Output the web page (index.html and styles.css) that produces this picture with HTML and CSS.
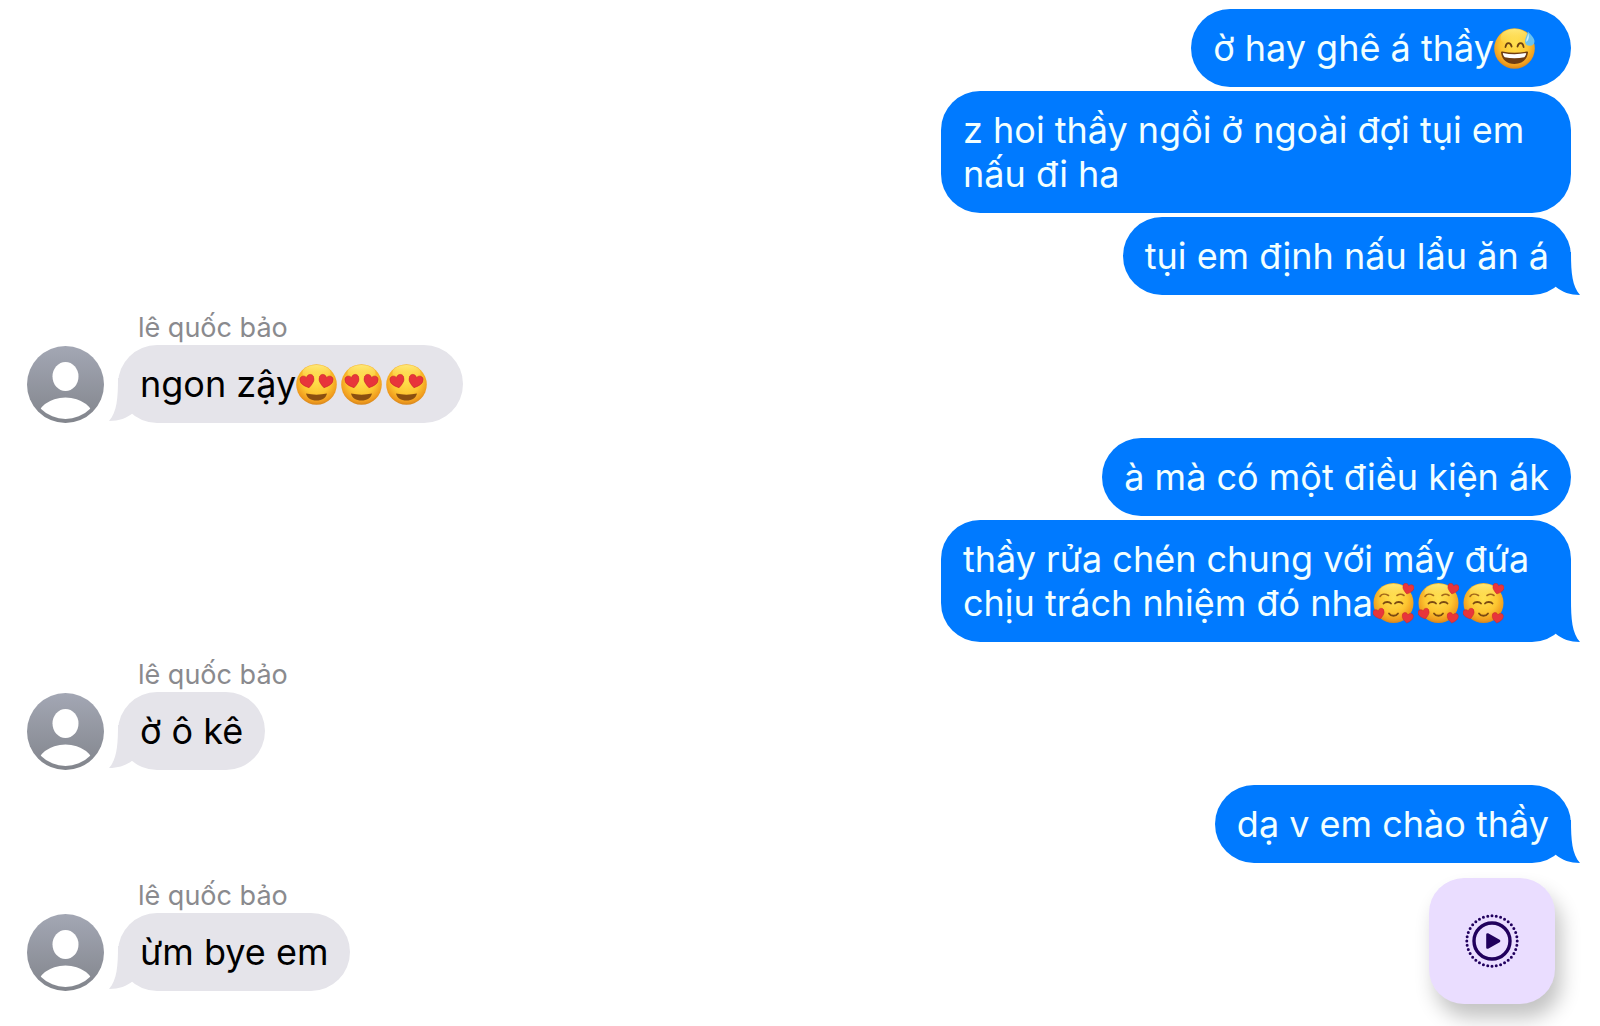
FILE: index.html
```html
<!DOCTYPE html>
<html lang="vi">
<head>
    <meta charset="UTF-8">
    <meta name="viewport" content="width=device-width, initial-scale=1.0">
    <title>Messages</title>
    <link rel="stylesheet" href="styles.css">
</head>
<body>

<!-- shared drawings -->
<svg class="defs" aria-hidden="true">
    <defs>
        <radialGradient id="face" cx="0.5" cy="0.4" r="0.62">
            <stop offset="0" stop-color="#ffe04f"/>
            <stop offset="0.55" stop-color="#fdc631"/>
            <stop offset="0.85" stop-color="#f09c1e"/>
            <stop offset="1" stop-color="#cf7f1c"/>
        </radialGradient>
        <linearGradient id="shine" x1="0" y1="0" x2="0" y2="1">
            <stop offset="0" stop-color="#fff28a" stop-opacity="0.8"/>
            <stop offset="1" stop-color="#ffe75c" stop-opacity="0"/>
        </linearGradient>
        <linearGradient id="avatar-bg" x1="0" y1="0" x2="0" y2="1">
            <stop offset="0" stop-color="#a3a7b4"/>
            <stop offset="1" stop-color="#82858c"/>
        </linearGradient>
        <clipPath id="avatar-clip"><circle cx="38.5" cy="38.5" r="34.5"/></clipPath>
    </defs>

    <symbol id="heart" viewBox="0 0 20 18">
        <path d="M10 17.5C4 13.5 0.5 10 0.5 5.8C0.5 2.5 2.7 0.6 5.2 0.6C7.3 0.6 9 1.7 10 3.8C11 1.7 12.7 0.6 14.8 0.6C17.3 0.6 19.5 2.5 19.5 5.8C19.5 10 16 13.5 10 17.5Z" fill="#e8353b" stroke="#c8282c" stroke-width="0.8"/>
    </symbol>

    <symbol id="sweat" viewBox="0 0 41 41">
        <circle cx="20.5" cy="20.5" r="20.3" fill="url(#face)"/>
        <ellipse cx="20.5" cy="9.5" rx="14" ry="8.5" fill="url(#shine)"/>
        <path d="M11.5 19C12.2 13.8 16.5 13.8 17.6 18.5M23.5 18.5C24.6 13.8 28.9 13.8 29.6 19" fill="none" stroke="#6b4112" stroke-width="1.8" stroke-linecap="round"/>
        <path d="M7 24.5C7 23.8 7.6 23.4 8.4 23.6C16.5 25.2 24.5 25.2 32.6 23.6C33.4 23.4 34 23.8 34 24.5C33 32 27.8 36 20.5 36C13.2 36 8 32 7 24.5Z" fill="#6f3d12"/>
        <path d="M8.8 25C16.5 26.6 24.5 26.6 32.2 25C32 27 31.2 28.5 30.2 29.2C24 30.6 17 30.6 10.8 29.2C9.8 28.5 9 27 8.8 25Z" fill="#fff"/>
        <path d="M34 3.5C36.5 6.5 40.5 10 40.5 13.2C40.5 16 38.3 17.8 35.7 17.8C33 17.8 31 16 31 13.4C31 10 33 7 34 3.5Z" fill="#6cc3ee"/>
        <path d="M34.4 5.5C33.5 9 32 11 32.2 13.8C34.2 13 35.6 9.5 34.4 5.5Z" fill="#c9edfc"/>
    </symbol>

    <symbol id="heart-eyes" viewBox="0 0 41 41">
        <circle cx="20.5" cy="20.5" r="20.3" fill="url(#face)"/>
        <ellipse cx="20.5" cy="9" rx="14" ry="8" fill="url(#shine)"/>
        <use href="#heart" x="4" y="9.5" width="15" height="16" transform="rotate(-14 11.5 17.5)"/>
        <use href="#heart" x="22" y="9.5" width="15" height="16" transform="rotate(14 29.5 17.5)"/>
        <path d="M10 29.5C16.5 31 24.5 31 31 29.5C30 34 26 36.5 20.5 36.5C15 36.5 11 34 10 29.5Z" fill="#8a4f10"/>
    </symbol>

    <symbol id="hearts" viewBox="0 0 41 41">
        <circle cx="20.5" cy="20" r="20" fill="url(#face)"/>
        <ellipse cx="20.5" cy="9" rx="14" ry="8" fill="url(#shine)"/>
        <path d="M7 13.5C8.5 11 12 10.5 15.5 12.5M24 12.5C26.5 10.8 29 11 31 12.5" fill="none" stroke="#a4691a" stroke-width="1.6" stroke-linecap="round"/>
        <path d="M10.5 20.5C12 18.5 16.5 18.5 18 20.5M22 20.5C23.5 18.5 28 18.5 29.5 20.5M16 30.5C18 33.5 23 33.5 25 30.5" fill="none" stroke="#7a4a12" stroke-width="1.8" stroke-linecap="round"/>
        <use href="#heart" x="29" y="0" width="12" height="12" transform="rotate(14 35 6)"/>
        <use href="#heart" x="0" y="25" width="12" height="12" transform="rotate(-14 6 31)"/>
        <use href="#heart" x="28.5" y="29" width="12" height="12" transform="rotate(8 34.5 35)"/>
    </symbol>

    <symbol id="tail" viewBox="0 0 34 43">
        <path d="M25 0C25 20 26 34 34 43C24 43 16 40 10 35L0 20V0Z" fill="currentColor"/>
    </symbol>

    <symbol id="person" viewBox="0 0 77 77">
        <circle cx="38.5" cy="38.5" r="38.5" fill="url(#avatar-bg)"/>
        <ellipse cx="38.5" cy="30.5" rx="13" ry="14.5" fill="#fff"/>
        <ellipse cx="38.5" cy="74" rx="29" ry="22.5" fill="#fff" clip-path="url(#avatar-clip)"/>
    </symbol>
</svg>

<main class="chat">
    <div class="group sent">
        <p class="bubble">ờ hay ghê á thầy<svg class="emoji" role="img" aria-label="😅"><use href="#sweat"/></svg>&nbsp;</p>
        <p class="bubble">z hoi thầy ngồi ở ngoài đợi tụi em nấu đi ha</p>
        <p class="bubble">tụi em định nấu lẩu ăn á<svg class="tail" aria-hidden="true"><use href="#tail"/></svg></p>
    </div>

    <div class="group received">
        <div class="name">lê quốc bảo</div>
        <div class="row">
            <svg class="avatar" aria-hidden="true"><use href="#person"/></svg>
            <p class="bubble">ngon zậy<svg class="emoji" role="img" aria-label="😍"><use href="#heart-eyes"/></svg><svg class="emoji" role="img" aria-label="😍"><use href="#heart-eyes"/></svg><svg class="emoji" role="img" aria-label="😍"><use href="#heart-eyes"/></svg>&nbsp;<svg class="tail" aria-hidden="true"><use href="#tail"/></svg></p>
        </div>
    </div>

    <div class="group sent">
        <p class="bubble">à mà có một điều kiện ák</p>
        <p class="bubble">thầy rửa chén chung với mấy đứa chịu trách nhiệm đó nha<svg class="emoji" role="img" aria-label="🥰"><use href="#hearts"/></svg><svg class="emoji" role="img" aria-label="🥰"><use href="#hearts"/></svg><svg class="emoji" role="img" aria-label="🥰"><use href="#hearts"/></svg><svg class="tail" aria-hidden="true"><use href="#tail"/></svg></p>
    </div>

    <div class="group received">
        <div class="name">lê quốc bảo</div>
        <div class="row">
            <svg class="avatar" aria-hidden="true"><use href="#person"/></svg>
            <p class="bubble">ờ ô kê<svg class="tail" aria-hidden="true"><use href="#tail"/></svg></p>
        </div>
    </div>

    <div class="group sent">
        <p class="bubble">dạ v em chào thầy<svg class="tail" aria-hidden="true"><use href="#tail"/></svg></p>
    </div>

    <div class="group received">
        <div class="name">lê quốc bảo</div>
        <div class="row">
            <svg class="avatar" aria-hidden="true"><use href="#person"/></svg>
            <p class="bubble">ừm bye em<svg class="tail" aria-hidden="true"><use href="#tail"/></svg></p>
        </div>
    </div>
</main>

<button class="play" type="button" aria-label="Play">
    <svg viewBox="0 0 56 56" aria-hidden="true">
        <circle cx="28" cy="28" r="25.2" fill="none" stroke="currentColor" stroke-width="3" stroke-linecap="round" stroke-dasharray="0 1" pathLength="36"/>
        <circle cx="28" cy="28" r="18" fill="none" stroke="currentColor" stroke-width="3.4"/>
        <path d="M23.5 21.5L35 28L23.5 34.5Z" fill="currentColor" stroke="currentColor" stroke-width="2.6" stroke-linejoin="round"/>
    </svg>
</button>

</body>
</html>
```
FILE: styles.css
```css
* {
    box-sizing: border-box;
}

body {
    margin: 0;
    min-height: 100vh;
    background-color: #fff;
    font-family: Inter, "Noto Sans", sans-serif;
    font-size: 36px;
    line-height: 44px;
    color: #000;
}

.defs {
    position: absolute;
    width: 0;
    height: 0;
}

.chat {
    display: flex;
    flex-direction: column;
    gap: 15px;
    padding: 9px 29px 32px 27px;
}

.group {
    display: flex;
    flex-direction: column;
    gap: 4px;
}

.sent {
    align-items: flex-end;
}

.received {
    align-items: flex-start;
    gap: 0;
}

.row {
    display: flex;
    align-items: flex-end;
    gap: 14px;
}

.name {
    height: 35px;
    padding-left: 111px;
    font-size: 27px;
    line-height: 35px;
    color: #8a8a8e;
}

.avatar {
    width: 77px;
    height: 77px;
    flex-shrink: 0;
}

.bubble {
    position: relative;
    isolation: isolate;
    max-width: 630px;
    margin: 0;
    padding: 17px 22px;
    border-radius: 39px;
}

.sent .bubble {
    background-color: #007aff;
    color: #f2ffff;
}

.received .bubble {
    background-color: #e5e4ea;
}

.emoji {
    width: 41px;
    height: 41px;
    margin-right: 4px;
    vertical-align: -8px;
}

/* sits over the corner of the bubble, under its text */
.tail {
    position: absolute;
    z-index: -1;
    right: -9px;
    bottom: 0;
    width: 34px;
    height: 43px;
    color: #007aff;
}

.received .tail {
    right: auto;
    left: -9px;
    bottom: 2px;
    color: #e5e4ea;
    transform: scaleX(-1);
}

.play {
    position: fixed;
    right: 45px;
    bottom: 22px;
    display: flex;
    align-items: center;
    justify-content: center;
    width: 126px;
    height: 126px;
    padding: 0;
    border: none;
    border-radius: 35px;
    background-color: #eaddff;
    color: #21005d;
    box-shadow: 6px 14px 20px rgba(0, 0, 0, 0.24);
    cursor: pointer;
}

.play svg {
    width: 56px;
    height: 56px;
}
```
